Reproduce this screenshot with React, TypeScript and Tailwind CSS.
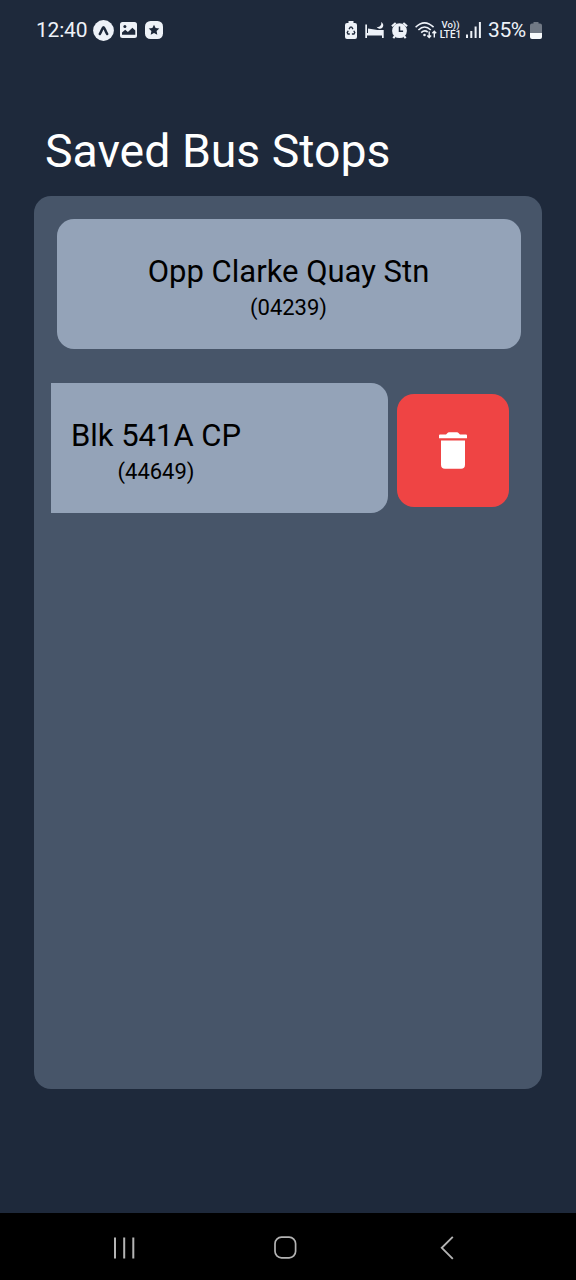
import React from "react";

function ExpoIcon() {
  return (
    <svg className="ml-[4px] h-[21px] w-[21px] shrink-0" viewBox="0 0 21 21">
      <circle cx="10.500" cy="10.500" r="10.400" fill="#eef2f8" />
      <path d="M6.800 14c1.900-2.600 2.700-6.800 3.700-6.800s1.800 4.200 3.700 6.800" fill="none" stroke="#1e293b" strokeWidth="2.500" strokeLinecap="round" strokeLinejoin="round" />
    </svg>
  );
}

function PictureIcon() {
  return (
    <svg className="ml-[6px] h-4 w-[17px] shrink-0" viewBox="0 0 17 16">
      <rect width="17" height="16" rx="2.500" fill="#eef2f8" />
      <circle cx="4.900" cy="4.600" r="1.500" fill="#1e293b" />
      <path d="M2 12.800V10.500l3.200-2.700 2.700 2.200 4.500-4.300 2.900 2.800v4.300z" fill="#1e293b" />
    </svg>
  );
}

function StarIcon() {
  return (
    <svg className="ml-2 h-[18px] w-[18px] shrink-0" viewBox="0 0 18 18">
      <rect width="18" height="18" rx="5.500" fill="#eef2f8" />
      <path d="M9 3.800l1.600 3.300 3.700.5-2.700 2.500.7 3.700L9 12l-3.300 1.800.7-3.700-2.700-2.500 3.700-.5z" fill="#1e293b" />
    </svg>
  );
}

function RecycleBattery() {
  return (
    <svg className="h-[18px] w-[12px] shrink-0" viewBox="0 0 12 18">
      <path d="M3.500 0h5v2H10q2 0 2 2v12q0 2-2 2H2q-2 0-2-2V4q0-2 2-2h1.500z" fill="#eef2f8" />
      <path d="M4 8.200l1.300-2.100h1.400l1.300 2.100M8.800 9.800l1 1.800-.8 1.400H6.900M4.800 13H3l-.8-1.400 1-1.800" fill="none" stroke="#1e293b" strokeWidth="1.300" />
    </svg>
  );
}

function BedIcon() {
  return (
    <svg className="ml-2 h-4 w-[19px] shrink-0" viewBox="0 0 19 16" fill="#eef2f8">
      <path d="M.3 2.500H2V11h15V8h1.700v8H17v-2.500H2V16H.3z" />
      <path d="M3 6.600l9.500 1.400H17v3.500H3z" />
      <path d="M16 0a3.600 3.600 0 0 1-4.400 4.800A3.500 3.500 0 1 0 16 0z" />
    </svg>
  );
}

function AlarmIcon() {
  return (
    <svg className="ml-[7px] h-[17px] w-[17px] shrink-0" viewBox="0 0 17 17">
      <path d="M.9 4.200L4.700 1M16.100 4.200L12.300 1M4 14l-1.700 2.200M13 14l1.700 2.200" stroke="#eef2f8" strokeWidth="2.100" />
      <circle cx="8.500" cy="8.700" r="7.400" fill="#eef2f8" />
      <path d="M8.500 4.500v4.700h3.600" fill="none" stroke="#1e293b" strokeWidth="1.500" />
    </svg>
  );
}

function WifiIcon() {
  return (
    <svg className="ml-[7px] h-[18px] w-[22px] shrink-0" viewBox="0 0 22 18" fill="none" stroke="#eef2f8">
      <path d="M.6 6.200Q9.500-2.600 18.600 6.200M3.400 9Q9.600 3 15.800 9M6.200 11.600Q9.500 8.500 12.700 11" strokeWidth="1.600" />
      <circle cx="9.500" cy="14" r="1.300" fill="#eef2f8" stroke="none" />
      <path d="M14.200 10.500v6M12.300 14.500l1.900 2 1.900-2M19.300 16.500v-6M17.400 12.300l1.900-2 1.900 2" strokeWidth="1.400" />
    </svg>
  );
}

function SignalIcon() {
  return (
    <svg className="ml-1 h-4 w-[15px] shrink-0" viewBox="0 0 15 16" fill="#eef2f8">
      <rect x="0" y="12.500" width="2" height="3.500" />
      <rect x="4.300" y="9" width="2" height="7" />
      <rect x="8.600" y="4.500" width="2" height="11.500" />
      <rect x="12.900" y="0" width="2" height="16" />
    </svg>
  );
}

function BatteryIcon() {
  return (
    <svg className="ml-1 h-[17px] w-3 shrink-0" viewBox="0 0 12 17">
      <path d="M3.500 0h5v1.500H10q2 0 2 2V11H0V3.500q0-2 2-2h1.500z" fill="#717985" />
      <path d="M0 11h12v4q0 2-2 2H2q-2 0-2-2z" fill="#f8fafc" />
    </svg>
  );
}

function StatusBar() {
  return (
    <header className="flex h-[60px] items-center justify-between pr-[34px] pl-9 text-[#eef2f8]">
      <div className="flex items-center">
        <span className="w-[53px] text-[21px] leading-6 tracking-[-0.2px] whitespace-nowrap">12:40</span>
        <ExpoIcon />
        <PictureIcon />
        <StarIcon />
      </div>
      <div className="flex items-center">
        <RecycleBattery />
        <BedIcon />
        <AlarmIcon />
        <WifiIcon />
        <div className="ml-[2px] flex w-[23px] flex-col items-center text-[10px] leading-[10px] font-medium whitespace-nowrap">
          <span className="text-[9.500px]">Vo))</span>
          <span>LTE1</span>
        </div>
        <SignalIcon />
        <span className="ml-[7px] w-[38px] text-[21px] leading-6 tracking-[-0.4px] whitespace-nowrap">35%</span>
        <BatteryIcon />
      </div>
    </header>
  );
}

function StopCard({ name, code }: { name: string; code: string }) {
  return (
    <button className="flex h-[130px] w-[464px] shrink-0 flex-col items-center rounded-[17px] bg-[#94a3b8] pt-[34px] text-black">
      <span className="text-[31px] leading-[38px] whitespace-nowrap">{name}</span>
      <span className="text-[22px] leading-[34px] whitespace-nowrap">{code}</span>
    </button>
  );
}

function DeleteButton() {
  return (
    <button aria-label="Delete" className="ml-[9px] flex h-[113px] w-28 shrink-0 items-center justify-center rounded-[17px] bg-[#ef4444]">
      <svg className="h-[37px] w-7" viewBox="0 0 28 37" fill="white">
        <path d="M0 3.500q0-1 1-1h6l1.500-1.600Q9 .3 10 .3h8q1 0 1.500.6L21 2.500h6q1 0 1 1v2.800H0z" />
        <path d="M2 8.500h24v24.200q0 4-4 4H6q-4 0-4-4z" />
      </svg>
    </button>
  );
}

function NavigationBar() {
  return (
    <nav className="flex h-[67px] items-center bg-black pt-[2px] text-[#b4b4b4]">
      <button aria-label="Recents" className="ml-[113px]">
        <svg className="h-[22px] w-[22px]" viewBox="0 0 22 22" fill="none" stroke="currentColor" strokeWidth="2">
          <path d="M2 .5v21M11.200 .5v21M20.300 .5v21" />
        </svg>
      </button>
      <button aria-label="Home" className="ml-[139px]">
        <svg className="h-[23px] w-[23px]" viewBox="0 0 23 23" fill="none" stroke="currentColor" strokeWidth="1.700">
          <rect x="1" y="1.200" width="20.600" height="20.600" rx="6.500" />
        </svg>
      </button>
      <button aria-label="Back" className="ml-[143px]">
        <svg className="h-6 w-[14px]" viewBox="0 0 14 24" fill="none" stroke="currentColor" strokeWidth="1.900">
          <path d="M12.800 .8L1.800 11.800l11 11" />
        </svg>
      </button>
    </nav>
  );
}

export default function App() {
  return (
    <div className="flex h-[1280px] w-[576px] flex-col overflow-hidden bg-[#1e293b] font-['Roboto',sans-serif]">
      <StatusBar />
      <main className="flex flex-1 flex-col px-[34px]">
        <h1 className="mt-[61px] ml-[11px] text-[46.400px] leading-[60px] whitespace-nowrap text-white">Saved Bus Stops</h1>
        <section className="mt-[15px] flex h-[893px] flex-col rounded-[17px] bg-[#475569] px-[17px] pt-[23px]">
          <div className="pl-[5.500px]">
            <StopCard name="Opp Clarke Quay Stn" code="(04239)" />
          </div>
          <div className="mt-[34px] flex items-center overflow-hidden">
            <div className="-ml-[127px] shrink-0">
              <StopCard name="Blk 541A CP" code="(44649)" />
            </div>
            <div className="pt-[5px]">
              <DeleteButton />
            </div>
          </div>
        </section>
      </main>
      <NavigationBar />
    </div>
  );
}
